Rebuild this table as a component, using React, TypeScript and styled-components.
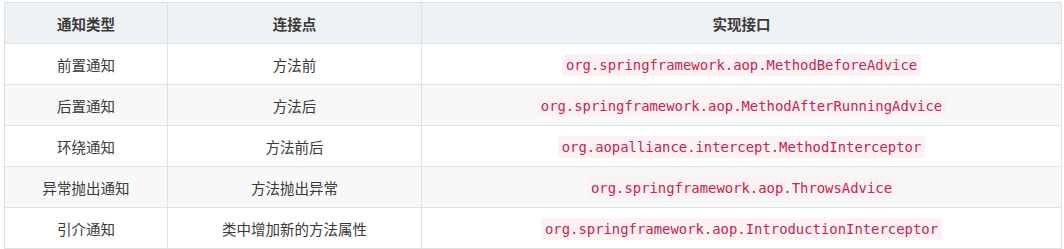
import styled, { createGlobalStyle } from "styled-components";

const GlobalStyle = createGlobalStyle`
  html, body {
    margin: 0;
    padding: 0;
    background: #ffffff;
  }
  body {
    font-family: "Open Sans", "Noto Sans CJK SC", sans-serif;
    color: #333333;
  }
`;

const Page = styled.div`
  padding: 2px 3px 0 4px;
`;

const StyledTable = styled.table`
  width: 1057px;
  border-collapse: collapse;
  table-layout: fixed;
  font-size: 14.5px;
  font-family: "Noto Sans CJK SC", sans-serif;
`;

const HeadCell = styled.th<{ $width: number }>`
  width: ${(props) => props.$width}px;
  height: 41px;
  padding: 0 13px;
  border: 1px solid #dfe2e5;
  background-color: #eff2f5;
  font-weight: 700;
  color: #3a3a3a;
  text-align: center;
  box-sizing: border-box;
`;

const Row = styled.tr<{ $striped: boolean }>`
  background-color: ${(props) => (props.$striped ? "#f8f8f8" : "#ffffff")};
`;

const Cell = styled.td`
  height: 41px;
  padding: 0 13px;
  border: 1px solid #dfe2e5;
  text-align: center;
  color: #3a3a3a;
  box-sizing: border-box;
`;

const Code = styled.code`
  display: inline-block;
  padding: 2px 4px;
  border-radius: 3px;
  background-color: #fbf2f4;
  color: #c7254e;
  font-family: "DejaVu Sans Mono", "Liberation Mono", monospace;
  font-size: 13.9px;
  line-height: 18px;
`;

const columns = [
  { title: "通知类型", width: 163 },
  { title: "连接点", width: 254 },
  { title: "实现接口", width: 640 },
];

const rows = [
  ["前置通知", "方法前", "org.springframework.aop.MethodBeforeAdvice"],
  ["后置通知", "方法后", "org.springframework.aop.MethodAfterRunningAdvice"],
  ["环绕通知", "方法前后", "org.aopalliance.intercept.MethodInterceptor"],
  ["异常抛出通知", "方法抛出异常", "org.springframework.aop.ThrowsAdvice"],
  ["引介通知", "类中增加新的方法属性", "org.springframework.aop.IntroductionInterceptor"],
];

export default function App() {
  return (
    <>
      <GlobalStyle />
      <Page>
        <StyledTable>
          <thead>
            <tr>
              {columns.map((col) => (
                <HeadCell key={col.title} $width={col.width}>
                  {col.title}
                </HeadCell>
              ))}
            </tr>
          </thead>
          <tbody>
            {rows.map(([type, point, iface], i) => (
              <Row key={type} $striped={i % 2 === 1}>
                <Cell>{type}</Cell>
                <Cell>{point}</Cell>
                <Cell>
                  <Code>{iface}</Code>
                </Cell>
              </Row>
            ))}
          </tbody>
        </StyledTable>
      </Page>
    </>
  );
}
